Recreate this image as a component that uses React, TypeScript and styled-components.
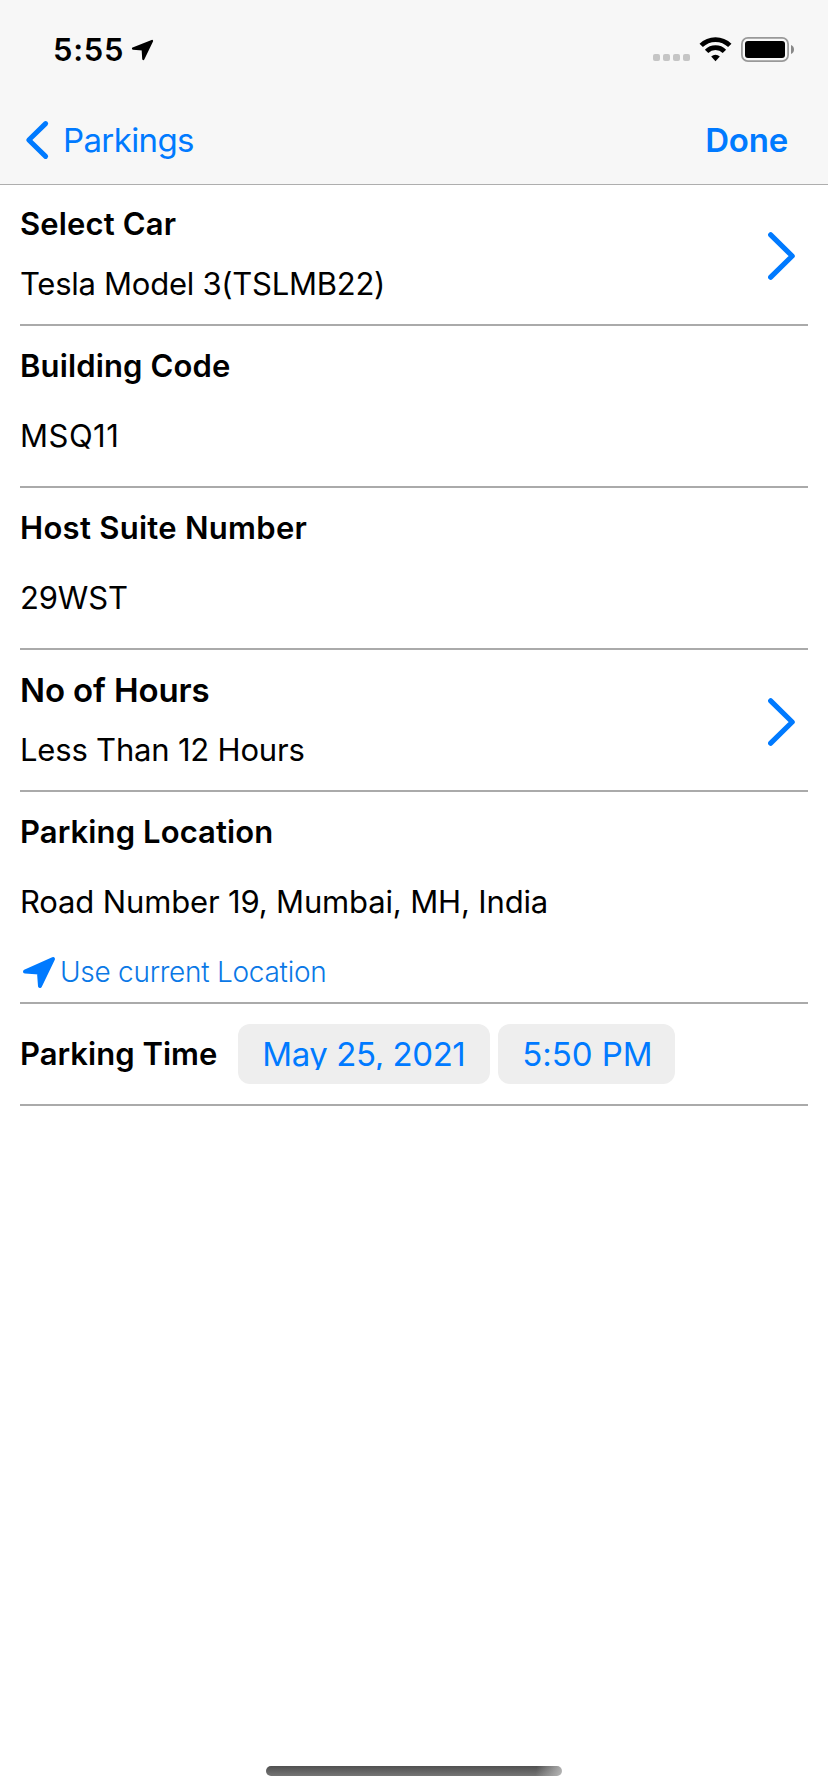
import React from "react";
import styled, { createGlobalStyle } from "styled-components";

const BLUE = "#007aff";

const GlobalStyle = createGlobalStyle`
  * { box-sizing: border-box; }
  body {
    margin: 0;
    background: #fff;
    color: #000;
    font-family: Inter, "Liberation Sans", sans-serif;
  }
  button {
    margin: 0;
    padding: 0;
    border: 0;
    background: none;
    font: inherit;
    color: inherit;
    text-align: left;
  }
`;

const Screen = styled.div`
  display: flex;
  flex-direction: column;
  width: 828px;
  height: 1792px;
  overflow: hidden;
`;

const Header = styled.header`
  height: 185px;
  background: #f7f7f7;
  border-bottom: 1px solid #aeaeae;
`;

const StatusBar = styled.div`
  display: flex;
  justify-content: space-between;
  height: 96px;
  padding: 30px 34px 26px 53px;
`;

const Clock = styled.div`
  display: flex;
  align-items: flex-start;
  gap: 7px;
  font-size: 31px;
  font-weight: 600;
  line-height: 40px;
  letter-spacing: 0.7px;
`;

const ClockArrow = styled.svg`
  margin-top: 9px;
`;

const Indicators = styled.div`
  display: flex;
  align-items: flex-start;
  padding-top: 7px;
`;

const Signal = styled.div`
  display: flex;
  gap: 3px;
  margin: 17px 9px 0 0;
`;

const SignalDot = styled.span`
  width: 7px;
  height: 7px;
  border-radius: 2px;
  background: #c5c5c5;
`;

const WifiIcon = styled.svg`
  margin-right: 9px;
`;

const NavBar = styled.nav`
  display: flex;
  justify-content: space-between;
  align-items: center;
  height: 88px;
  padding: 0 40px 0 25px;
  color: ${BLUE};
  font-size: 33px;
  line-height: 40px;
`;

const BackButton = styled.button`
  display: flex;
  align-items: center;
  gap: 13px;
  letter-spacing: -0.62px;
`;

const DoneButton = styled.button`
  font-weight: 600;
  letter-spacing: -0.2px;
`;

const Form = styled.main`
  display: flex;
  flex-direction: column;
  margin-top: -1px;
  padding: 0 20px;
`;

const Section = styled.section<{ $bottom: number }>`
  display: flex;
  align-items: center;
  justify-content: space-between;
  padding: 20px 0 ${(p) => p.$bottom}px;
  border-bottom: 2px solid #aaa;
`;

const Fields = styled.div<{ $gap: number }>`
  display: flex;
  flex-direction: column;
  gap: ${(p) => p.$gap}px;
`;

const Label = styled.h2<{ $size?: number; $tracking?: number }>`
  margin: 0;
  font-size: ${(p) => p.$size ?? 31}px;
  font-weight: 600;
  line-height: 40px;
  letter-spacing: ${(p) => p.$tracking ?? 0.14}px;
  white-space: nowrap;
`;

const Value = styled.div<{ $tracking?: number }>`
  font-size: 31px;
  line-height: 40px;
  letter-spacing: ${(p) => p.$tracking ?? -0.15}px;
  white-space: nowrap;
`;

const LocationButton = styled.button`
  display: flex;
  align-items: center;
  gap: 4px;
  height: 40px;
  padding-left: 2px;
  color: #0a78e6;
  font-size: 28px;
  font-weight: 300;
  line-height: 40px;
  letter-spacing: -0.27px;
`;

const LocationArrow = styled.svg`
  margin-top: 2px;
`;

const TimeSection = styled(Section)`
  justify-content: flex-start;
`;

const Pickers = styled.div`
  display: flex;
  gap: 8px;
  margin-left: 21px;
`;

const Pill = styled.button<{ $width: number; $tracking: number }>`
  width: ${(p) => p.$width}px;
  height: 60px;
  padding-left: 24px;
  border-radius: 12px;
  background: #eee;
  color: ${BLUE};
  font-size: 33px;
  letter-spacing: ${(p) => p.$tracking}px;
`;

const PillText = styled.span`
  display: block;
  line-height: 40px;
  clip-path: inset(0 0 4px 0);
  white-space: nowrap;
`;

const HomeIndicator = styled.div`
  align-self: center;
  width: 296px;
  height: 10px;
  margin: auto 0 16px;
  border-radius: 5px;
  background: linear-gradient(100deg, transparent 91%, rgba(190, 190, 190, 0.9) 100%),
    linear-gradient(#505050, #757575);
`;

const Chevron = () => (
  <svg width="28" height="48" viewBox="0 0 28 48" fill="none">
    <path d="M2.7 2.8 24.2 24 2.7 45.2" stroke={BLUE} strokeWidth="5.2" strokeLinecap="round" strokeLinejoin="round" />
  </svg>
);

const DisclosureSlot = styled.button`
  display: flex;
  margin: 3px 12px 0 0;
`;

const Disclosure = ({ label }: { label: string }) => (
  <DisclosureSlot aria-label={label}>
    <Chevron />
  </DisclosureSlot>
);

export default function App() {
  return (
    <Screen>
      <GlobalStyle />
      <Header>
        <StatusBar>
          <Clock>
            5:55
            <ClockArrow width="23" height="22" viewBox="0 0 23 22">
              <path d="M2 9.6 21 2 12.3 20 11.7 10.3Z" fill="#000" stroke="#000" strokeWidth="2.2" strokeLinejoin="round" />
            </ClockArrow>
          </Clock>
          <Indicators>
            <Signal>
              <SignalDot />
              <SignalDot />
              <SignalDot />
              <SignalDot />
            </Signal>
            <WifiIcon width="33" height="25" viewBox="0 0 33 25" fill="none">
              <path d="M2.2 8.4A20.4 20.4 0 0 1 30.8 8.4" stroke="#000" strokeWidth="4.8" />
              <path d="M7.6 14.4A12.6 12.6 0 0 1 25.4 14.4" stroke="#000" strokeWidth="4.8" />
              <path d="M12.2 19.6A6.2 6.2 0 0 1 20.8 19.6L16.5 24.2Z" fill="#000" />
            </WifiIcon>
            <svg width="53" height="25" viewBox="0 0 53 25">
              <rect x="0.9" y="0.9" width="46.2" height="23.2" rx="6" fill="none" stroke="#999" strokeWidth="1.8" />
              <rect x="4" y="4" width="40" height="17" rx="3" fill="#000" />
              <path d="M50 8Q53 9.2 53 12.5T50 17Z" fill="#888" />
            </svg>
          </Indicators>
        </StatusBar>
        <NavBar>
          <BackButton>
            <svg width="25" height="40" viewBox="0 0 25 40" fill="none">
              <path d="M20.6 3.6 3.8 20 20.6 36.4" stroke={BLUE} strokeWidth="5" strokeLinecap="round" strokeLinejoin="round" />
            </svg>
            Parkings
          </BackButton>
          <DoneButton>Done</DoneButton>
        </NavBar>
      </Header>

      <Form>
        <Section $bottom={20}>
          <Fields $gap={20}>
            <Label>Select Car</Label>
            <Value $tracking={-0.26}>Tesla Model 3(TSLMB22)</Value>
          </Fields>
          <Disclosure label="Select Car" />
        </Section>
        <Section $bottom={30}>
          <Fields $gap={30}>
            <Label>Building Code</Label>
            <Value $tracking={0.5}>MSQ11</Value>
          </Fields>
        </Section>
        <Section $bottom={30}>
          <Fields $gap={30}>
            <Label $tracking={0.29}>Host Suite Number</Label>
            <Value>29WST</Value>
          </Fields>
        </Section>
        <Section $bottom={20}>
          <Fields $gap={20}>
            <Label $size={33} $tracking={-0.12}>No of Hours</Label>
            <Value $tracking={-0.19}>Less Than 12 Hours</Value>
          </Fields>
          <Disclosure label="No of Hours" />
        </Section>
        <Section $bottom={10}>
          <Fields $gap={30}>
            <Label $tracking={0.1}>Parking Location</Label>
            <Value>Road Number 19, Mumbai, MH, India</Value>
            <LocationButton>
              <LocationArrow width="34" height="34" viewBox="0 0 34 34">
                <path d="M3 15.6 31 3 18 30 17 16.5Z" fill={BLUE} stroke={BLUE} strokeWidth="4" strokeLinejoin="round" />
              </LocationArrow>
              Use current Location
            </LocationButton>
          </Fields>
        </Section>
        <TimeSection $bottom={20}>
          <Label $tracking={0.02}>Parking Time</Label>
          <Pickers>
            <Pill $width={252} $tracking={-0.44}>
              <PillText>May 25, 2021</PillText>
            </Pill>
            <Pill $width={177} $tracking={-0.05}>
              <PillText>5:50 PM</PillText>
            </Pill>
          </Pickers>
        </TimeSection>
      </Form>

      <HomeIndicator />
    </Screen>
  );
}
